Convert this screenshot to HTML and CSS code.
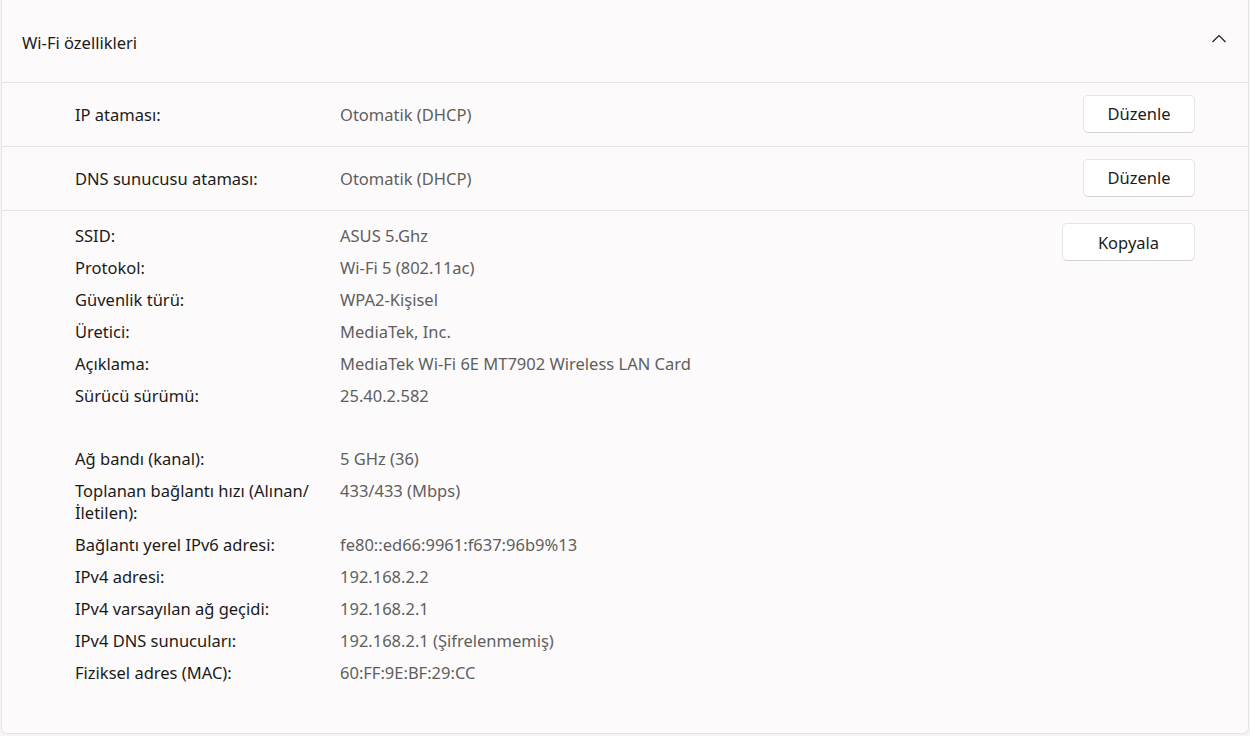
FILE: index.html
```html
<!DOCTYPE html>
<html lang="tr">
<head>
    <meta charset="UTF-8">
    <title>Wi-Fi özellikleri</title>
    <link rel="stylesheet" href="styles.css">
</head>
<body>
    <section class="card">
        <div class="card-head">
            <span class="card-title">Wi-Fi özellikleri</span>
            <svg class="chevron" width="16" height="10" viewBox="0 0 16 10">
                <path d="M1.5 8 L8 1.5 L14.5 8" fill="none" stroke="#1b1b1b" stroke-width="1.2"/>
            </svg>
        </div>

        <div class="setting-row">
            <span class="label">IP ataması:</span>
            <span class="value">Otomatik (DHCP)</span>
            <button class="btn btn-edit">Düzenle</button>
        </div>

        <div class="setting-row">
            <span class="label">DNS sunucusu ataması:</span>
            <span class="value">Otomatik (DHCP)</span>
            <button class="btn btn-edit">Düzenle</button>
        </div>

        <div class="details">
            <dl class="props">
                <dt>SSID:</dt><dd>ASUS 5.Ghz</dd>
                <dt>Protokol:</dt><dd>Wi-Fi 5 (802.11ac)</dd>
                <dt>Güvenlik türü:</dt><dd>WPA2-Kişisel</dd>
                <dt>Üretici:</dt><dd>MediaTek, Inc.</dd>
                <dt>Açıklama:</dt><dd>MediaTek Wi-Fi 6E MT7902 Wireless LAN Card</dd>
                <dt>Sürücü sürümü:</dt><dd>25.40.2.582</dd>
                <dt class="spacer"></dt><dd class="spacer"></dd>
                <dt>Ağ bandı (kanal):</dt><dd>5 GHz (36)</dd>
                <dt>Toplanan bağlantı hızı (Alınan/ İletilen):</dt><dd>433/433 (Mbps)</dd>
                <dt>Bağlantı yerel IPv6 adresi:</dt><dd>fe80::ed66:9961:f637:96b9%13</dd>
                <dt>IPv4 adresi:</dt><dd>192.168.2.2</dd>
                <dt>IPv4 varsayılan ağ geçidi:</dt><dd>192.168.2.1</dd>
                <dt>IPv4 DNS sunucuları:</dt><dd>192.168.2.1 (Şifrelenmemiş)</dd>
                <dt>Fiziksel adres (MAC):</dt><dd>60:FF:9E:BF:29:CC</dd>
            </dl>
            <button class="btn btn-copy">Kopyala</button>
        </div>
    </section>
</body>
</html>
```

FILE: styles.css
```css
body {
    margin: 0;
    padding: 0;
    background: #f7f4f4;
    font-family: "Noto Sans", "Open Sans", sans-serif;
    font-size: 16.5px;
    color: #1b1b1b;
}
.card {
    margin: 0 1px;
    height: 734px;
    box-sizing: border-box;
    background: #fcfafa;
    border: 1px solid #ebe3e3;
    border-top: 0;
    border-radius: 0 0 6px 6px;
}
.card-head {
    display: flex;
    align-items: center;
    justify-content: space-between;
    height: 83px;
    padding: 0 21px 0 20px;
    box-sizing: border-box;
    border-bottom: 1px solid #ebe3e3;
}
.card-title {
    padding-top: 2px;
}
.chevron {
    margin-top: -4px;
}
.setting-row {
    display: flex;
    align-items: center;
    height: 64px;
    padding: 0 53px 0 73px;
    box-sizing: border-box;
    border-bottom: 1px solid #ebe3e3;
}
.label {
    width: 265px;
    flex: none;
}
.value {
    flex: 1;
    color: #5f5f5f;
}
.btn {
    font-family: inherit;
    font-size: 16.5px;
    color: #1b1b1b;
    height: 38px;
    background: #ffffff;
    border: 1px solid #e5e5e5;
    border-bottom-color: #d0d0d0;
    border-radius: 5px;
    padding: 0;
    margin-top: -2px;
}
.btn-edit {
    width: 112px;
}
.btn-copy {
    width: 133px;
    flex: none;
}
.details {
    display: flex;
    align-items: flex-start;
    padding: 14px 53px 0 73px;
}
.props {
    flex: 1;
    display: grid;
    grid-template-columns: 255px 1fr;
    column-gap: 10px;
    row-gap: 10px;
    margin: 0;
    line-height: 22px;
}
.props dt {
    margin: 0;
}
.props dd {
    margin: 0;
    color: #5f5f5f;
}
.props .spacer {
    height: 21px;
}
```
